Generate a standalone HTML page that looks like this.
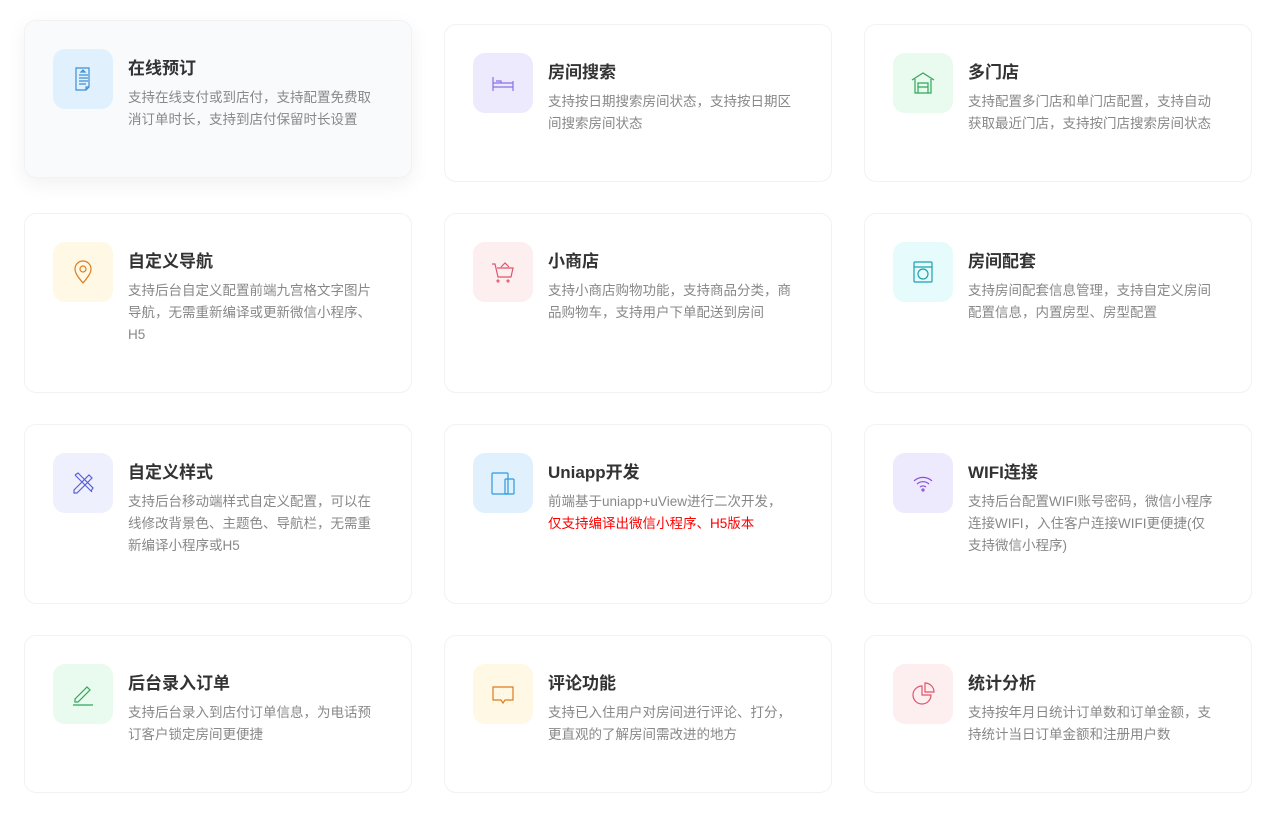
<!DOCTYPE html><html><head><meta charset="utf-8"><style>
body{margin:0;width:1272px;height:818px;background:#fff;font-family:"Liberation Sans","Noto Sans CJK SC",sans-serif;position:relative;overflow:hidden}
.c{position:absolute;width:388px;border:1px solid #f2f2f4;border-radius:12px;background:#fff;box-sizing:border-box}
.c.h{background:#f9fafc;box-shadow:0 6px 20px rgba(0,0,0,.06)}
.i{position:absolute;left:28px;top:28px;width:60px;height:60px;border-radius:12px;display:flex;align-items:center;justify-content:center}
.t{position:absolute;left:103px;top:33px;font-size:17px;font-weight:bold;color:#333}
.d{position:absolute;left:103px;top:66px;width:250px;font-size:13.5px;line-height:22px;color:#888}
svg{width:28px;height:28px;fill:none;stroke-width:1.2}
</style></head><body>
<div class="c h" style="left:24px;top:20px;height:158px"><div class="i" style="background:#e0f1fd"><svg viewBox="0 0 28 28" stroke="#3a8fd6"><path d="M7 3h13v19l-3 3H7z M17 25v-3h3 M10 10h9 M10 13h9 M10 16h9 M10 19h7 M14 5l2 2h-4z"/></svg></div><div class="t">在线预订</div><div class="d">支持在线支付或到店付，支持配置免费取消订单时长，支持到店付保留时长设置</div></div>
<div class="c" style="left:444px;top:24px;height:158px"><div class="i" style="background:#eeeafd"><svg viewBox="0 0 28 28" stroke="#8b6fe8"><path d="M4 8v14 M24 12v10 M4 18h20 M4 14h20v4 M7 12h5v2"/></svg></div><div class="t">房间搜索</div><div class="d">支持按日期搜索房间状态，支持按日期区间搜索房间状态</div></div>
<div class="c" style="left:864px;top:24px;height:158px"><div class="i" style="background:#e9faef"><svg viewBox="0 0 28 28" stroke="#2fa85a"><path d="M3 11l11-7 11 7 M6 10v14h16V10 M9 14h10v10H9z M9 18h10"/></svg></div><div class="t">多门店</div><div class="d">支持配置多门店和单门店配置，支持自动获取最近门店，支持按门店搜索房间状态</div></div>

<div class="c" style="left:24px;top:213px;height:180px"><div class="i" style="background:#fef8e4"><svg viewBox="0 0 28 28" stroke="#e07b1c"><path d="M14 25c-5-6-8-10-8-14a8 8 0 0116 0c0 4-3 8-8 14z"/><circle cx="14" cy="11" r="3"/></svg></div><div class="t">自定义导航</div><div class="d">支持后台自定义配置前端九宫格文字图片导航，无需重新编译或更新微信小程序、H5</div></div>
<div class="c" style="left:444px;top:213px;height:180px"><div class="i" style="background:#fdeef0"><svg viewBox="0 0 28 28" stroke="#e0546a"><path d="M3 6h3l3 13h13l2-9H8 M10 23a1 1 0 100 .1 M20 23a1 1 0 100 .1 M12 9l4-4 4 4"/></svg></div><div class="t">小商店</div><div class="d">支持小商店购物功能，支持商品分类，商品购物车，支持用户下单配送到房间</div></div>
<div class="c" style="left:864px;top:213px;height:180px"><div class="i" style="background:#e6fbfc"><svg viewBox="0 0 28 28" stroke="#1a9fb0"><rect x="5" y="4" width="18" height="20" rx="1"/><path d="M5 9h18"/><circle cx="14" cy="16" r="5"/></svg></div><div class="t">房间配套</div><div class="d">支持房间配套信息管理，支持自定义房间配置信息，内置房型、房型配置</div></div>

<div class="c" style="left:24px;top:424px;height:180px"><div class="i" style="background:#eef0fe"><svg viewBox="0 0 28 28" stroke="#5a5fd6"><path d="M5 21L20 6l3 3L8 24H5z M6 6l17 17 M6 6l3-2 15 15-2 3"/></svg></div><div class="t">自定义样式</div><div class="d">支持后台移动端样式自定义配置，可以在线修改背景色、主题色、导航栏，无需重新编译小程序或H5</div></div>
<div class="c" style="left:444px;top:424px;height:180px"><div class="i" style="background:#e0f1fd"><svg viewBox="0 0 28 28" stroke="#2d9ae0"><rect x="3" y="4" width="16" height="21" rx="1"/><rect x="16" y="10" width="9" height="15" rx="1"/></svg></div><div class="t">Uniapp开发</div><div class="d">前端基于uniapp+uView进行二次开发，<br><span style="color:#f00">仅支持编译出微信小程序、H5版本</span></div></div>
<div class="c" style="left:864px;top:424px;height:180px"><div class="i" style="background:#eeeafd"><svg viewBox="0 0 28 28" stroke="#8b4fd6"><path d="M5 12a13 13 0 0118 0 M8 15a9 9 0 0112 0 M11 18a5 5 0 016 0"/><circle cx="14" cy="21" r="1"/></svg></div><div class="t">WIFI连接</div><div class="d">支持后台配置WIFI账号密码，微信小程序连接WIFI，入住客户连接WIFI更便捷(仅支持微信小程序)</div></div>

<div class="c" style="left:24px;top:635px;height:158px"><div class="i" style="background:#e9faef"><svg viewBox="0 0 28 28" stroke="#2fa85a"><path d="M6 19L18 7l3 3L9 22H6z M4 25h20"/></svg></div><div class="t">后台录入订单</div><div class="d">支持后台录入到店付订单信息，为电话预订客户锁定房间更便捷</div></div>
<div class="c" style="left:444px;top:635px;height:158px"><div class="i" style="background:#fef8e4"><svg viewBox="0 0 28 28" stroke="#e07b1c"><path d="M4 7h20v13h-8l-2 3-2-3H4z M10 14h.1 M14 14h.1 M18 14h.1"/></svg></div><div class="t">评论功能</div><div class="d">支持已入住用户对房间进行评论、打分，更直观的了解房间需改进的地方</div></div>
<div class="c" style="left:864px;top:635px;height:158px"><div class="i" style="background:#fdeef0"><svg viewBox="0 0 28 28" stroke="#e0546a"><path d="M13 6a9 9 0 109 9h-9z M16 3v9h9a9 9 0 00-9-9z"/></svg></div><div class="t">统计分析</div><div class="d">支持按年月日统计订单数和订单金额，支持统计当日订单金额和注册用户数</div></div>
</body></html>
